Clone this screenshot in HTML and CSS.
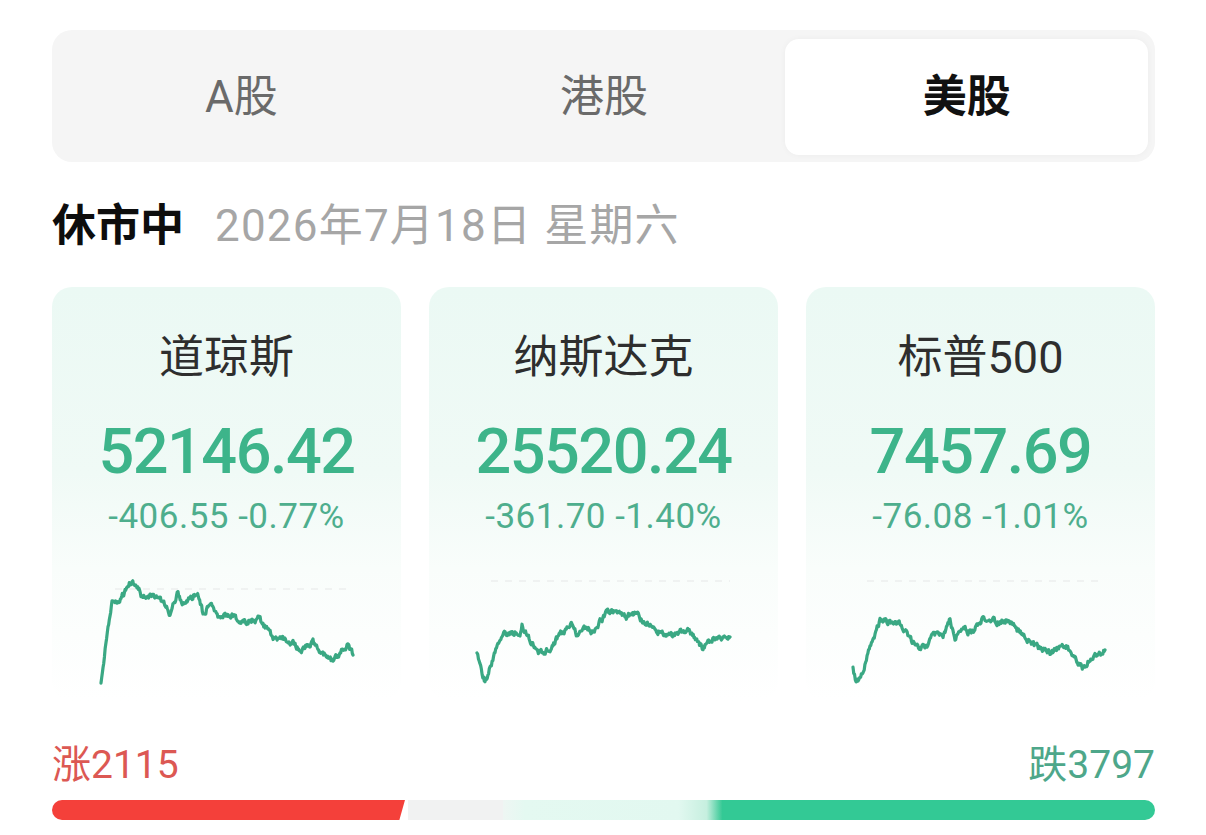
FILE: index.html
```html
<!DOCTYPE html>
<html lang="zh-CN">
<head>
<meta charset="utf-8">
<title>行情</title>
<link rel="stylesheet" href="styles.css">
</head>
<body>
<div class="page">
  <div class="tabs">
    <div class="tab">A股</div>
    <div class="tab">港股</div>
    <div class="tab tab-active">美股</div>
  </div>

  <div class="status">
    <span class="status-state">休市中</span>
    <span class="status-date">2026年7月18日 星期六</span>
  </div>

  <div class="cards">
    <div class="card">
      <div class="card-name">道琼斯</div>
      <div class="card-value">52146.42</div>
      <div class="card-change">-406.55 -0.77%</div>
      <svg class="spark" viewBox="0 0 349 130" data-ref="24" data-seed="11"
           data-points="49,118 51,102 56,62 60,38 65,38 71,30 78,17 85,22 91,33 105,30 118,48 126,27 131,40 145,28 151,48 158,40 168,53 178,50 191,58 206,53 221,72 241,78 248,85 261,78 275,92 281,97 295,80 301,90"></svg>
    </div>
    <div class="card">
      <div class="card-name">纳斯达克</div>
      <div class="card-value">25520.24</div>
      <div class="card-change">-361.70 -1.40%</div>
      <svg class="spark" viewBox="0 0 349 130" data-ref="16" data-seed="23"
           data-points="48,90 56,118 71,72 74,67 88,68 91,75 93,62 108,87 121,85 128,73 143,60 148,70 158,62 164,67 178,47 191,47 198,53 203,47 224,63 238,72 258,65 274,83 283,73 291,73 301,72"></svg>
    </div>
    <div class="card">
      <div class="card-name">标普500</div>
      <div class="card-value">7457.69</div>
      <div class="card-change">-76.08 -1.01%</div>
      <svg class="spark" viewBox="0 0 349 130" data-ref="16" data-seed="37"
           data-points="47,102 50,118 56,108 64,82 74,55 84,57 91,57 99,65 109,82 121,82 126,68 137,73 144,55 149,72 157,62 164,68 177,53 191,57 202,55 211,65 224,78 244,88 259,80 277,103 284,93 299,85"></svg>
    </div>
  </div>

  <div class="breadth-labels">
    <span class="breadth-up">涨2115</span>
    <span class="breadth-down">跌3797</span>
  </div>
  <div class="breadth-bar">
    <div class="seg seg-up"></div>
    <div class="seg seg-flat"></div>
    <div class="seg seg-fade"></div>
    <div class="seg seg-down"></div>
  </div>
</div>
<script src="chart.js"></script>
</body>
</html>
```

FILE: styles.css
```css
* {
  box-sizing: border-box;
}

body {
  margin: 0;
  background: #ffffff;
  font-family: Roboto, "Noto Sans CJK SC", "Noto Sans", sans-serif;
  color: #222;
}

.page {
  width: 1206px;
  padding: 30px 51px 0 52px;
}

/* market switcher */
.tabs {
  height: 132px;
  background: #f5f5f5;
  border-radius: 20px;
  padding: 9px 7px 7px 8px;
  display: grid;
  grid-template-columns: repeat(3, 1fr);
}

.tab {
  display: flex;
  align-items: center;
  justify-content: center;
  padding-bottom: 9px;
  font-size: 44px;
  color: #6a6a6a;
  border-radius: 14px;
}

.tab-active {
  background: #ffffff;
  color: #111;
  font-weight: 700;
  box-shadow: 0 0 6px rgba(0, 0, 0, 0.04);
}

/* trading status line */
.status {
  margin-top: 35px;
  height: 50px;
  display: flex;
  align-items: center;
  gap: 31px;
  white-space: nowrap;
}

.status-state {
  font-size: 44px;
  font-weight: 700;
  color: #0d0d0d;
}

.status-date {
  font-size: 44px;
  letter-spacing: 1.2px;
  color: #a6a6a6;
}

/* index cards */
.cards {
  margin-top: 40px;
  display: grid;
  grid-template-columns: repeat(3, 349px);
  gap: 28px;
}

.card {
  height: 414px;
  border-radius: 20px;
  background: linear-gradient(180deg, #ebf9f4 0%, #f0faf6 45%, #f9fdfb 68%, #ffffff 100%);
  padding-top: 46px;
  display: flex;
  flex-direction: column;
  align-items: center;
}

.card-name {
  height: 50px;
  line-height: 50px;
  font-size: 45px;
  color: #2e2e2e;
}

.card-value {
  margin-top: 34px;
  height: 70px;
  line-height: 70px;
  font-size: 63px;
  font-weight: 500;
  letter-spacing: -1.5px;
  color: #3db48a;
}

.card-change {
  margin-top: 10px;
  height: 40px;
  line-height: 40px;
  font-size: 35px;
  letter-spacing: 0.5px;
  color: #4eae8d;
}

.spark {
  margin-top: 28px;
  width: 349px;
  height: 130px;
  display: block;
}

.spark-ref {
  stroke: #e6e8e7;
  stroke-width: 1.2;
  stroke-dasharray: 7 7;
  fill: none;
}

.spark-line {
  stroke: #3aa883;
  stroke-width: 3.2;
  stroke-linejoin: round;
  stroke-linecap: round;
  fill: none;
}

/* advancers / decliners */
.breadth-labels {
  margin-top: 38px;
  height: 44px;
  display: flex;
  justify-content: space-between;
  align-items: center;
  font-size: 39px;
}

.breadth-up {
  color: #dc5853;
}

.breadth-down {
  color: #4ea78a;
}

.breadth-bar {
  margin-top: 17px;
  height: 20px;
  display: flex;
}

.seg {
  height: 100%;
}

.seg-up {
  width: 353px;
  background: #f4403a;
  border-radius: 10px 0 0 10px;
  clip-path: polygon(0 0, 100% 0, 98.4% 100%, 0 100%);
}

.seg-flat {
  width: 95px;
  margin-left: 3px;
  background: #f1f2f2;
}

.seg-fade {
  width: 219px;
  background: linear-gradient(90deg, #eef6f3 0%, #e4f9f1 10%, #e2f8f0 80%, #c6efdf 93%, #38c996 100%);
}

.seg-down {
  flex: 1;
  background: #33c995;
  border-radius: 0 10px 10px 0;
}
```

FILE: chart.js
```js
// Draws each intraday sparkline from its anchor points, adding
// a small seeded jitter so the line looks like tick data.
(function () {
  var NS = "http://www.w3.org/2000/svg";

  function rng(seed) {
    var a = seed >>> 0;
    return function () {
      a = (a + 0x6d2b79f5) >>> 0;
      var t = a;
      t = Math.imul(t ^ (t >>> 15), t | 1);
      t ^= t + Math.imul(t ^ (t >>> 7), t | 61);
      return ((t ^ (t >>> 14)) >>> 0) / 4294967296;
    };
  }

  document.querySelectorAll("svg.spark").forEach(function (svg) {
    var pts = svg.getAttribute("data-points").trim().split(/\s+/).map(function (p) {
      var xy = p.split(",");
      return [parseFloat(xy[0]), parseFloat(xy[1])];
    });
    var rand = rng(parseInt(svg.getAttribute("data-seed"), 10));
    var refY = parseFloat(svg.getAttribute("data-ref"));

    var ref = document.createElementNS(NS, "line");
    ref.setAttribute("class", "spark-ref");
    ref.setAttribute("x1", pts[0][0] + 14);
    ref.setAttribute("x2", pts[pts.length - 1][0]);
    ref.setAttribute("y1", refY);
    ref.setAttribute("y2", refY);
    svg.appendChild(ref);

    var out = [];
    var w = 0;
    for (var i = 0; i < pts.length - 1; i++) {
      var a = pts[i], b = pts[i + 1];
      var steps = Math.max(2, Math.round((b[0] - a[0]) / 0.7));
      for (var s = 0; s < steps; s++) {
        var t = s / steps;
        var x = a[0] + (b[0] - a[0]) * t;
        var y = a[1] + (b[1] - a[1]) * t;
        w = 0.55 * w + (rand() - 0.5) * 5;
        out.push(x.toFixed(2) + "," + (y + w).toFixed(2));
      }
    }
    var last = pts[pts.length - 1];
    out.push(last[0] + "," + last[1]);

    var line = document.createElementNS(NS, "polyline");
    line.setAttribute("class", "spark-line");
    line.setAttribute("points", out.join(" "));
    svg.appendChild(line);
  });
})();
```
